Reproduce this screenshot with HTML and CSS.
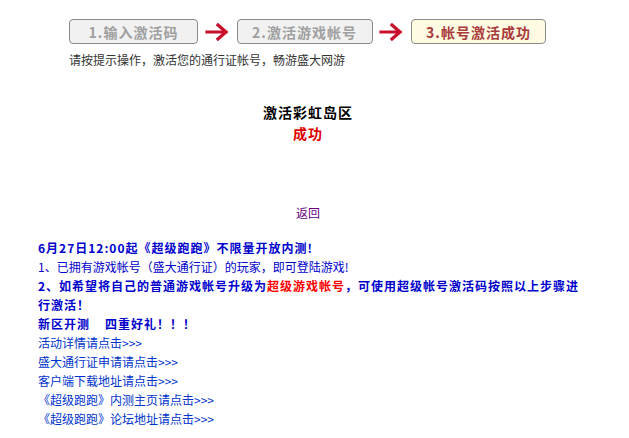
FILE: index.html
```html
<!DOCTYPE html>
<html lang="zh-CN">
<head>
<meta charset="utf-8">
<title>帐号激活成功</title>
<link rel="stylesheet" href="styles.css">
</head>
<body>
<div class="page">
  <div class="steps">
    <div class="step step-done">1.输入激活码</div>
    <div class="arrow"><svg width="25" height="18" viewBox="0 0 25 18"><path d="M2 9H21M13 2L21 9L13 16" fill="none" stroke="#c8102e" stroke-width="3.2" stroke-linecap="square"/></svg></div>
    <div class="step step-done step-wide">2.激活游戏帐号</div>
    <div class="arrow"><svg width="25" height="18" viewBox="0 0 25 18"><path d="M2 9H21M13 2L21 9L13 16" fill="none" stroke="#c8102e" stroke-width="3.2" stroke-linecap="square"/></svg></div>
    <div class="step step-current">3.帐号激活成功</div>
  </div>
  <p class="tip">请按提示操作，激活您的通行证帐号，畅游盛大网游</p>

  <div class="result">
    <p class="result-title">激活彩虹岛区</p>
    <p class="result-status">成功</p>
    <p class="result-back"><a class="back-link" href="#">返回</a></p>
  </div>

  <div class="notice">
    <p class="line strong">6月27日12:00起《超级跑跑》不限量开放内测!</p>
    <p class="line">1、已拥有游戏帐号（盛大通行证）的玩家，即可登陆游戏!</p>
    <p class="line strong"><span class="nowrap">2、如希望将自己的普通游戏帐号升级为<span class="hl">超级游戏帐号</span>，可使用超级帐号激活码按照以上步骤进</span><br>行激活！</p>
    <p class="line strong">新区开测&nbsp;&nbsp;&nbsp;&nbsp;四重好礼！！！</p>
    <p class="line"><a class="link" href="#">活动详情请点击&gt;&gt;&gt;</a></p>
    <p class="line"><a class="link" href="#">盛大通行证申请请点击&gt;&gt;&gt;</a></p>
    <p class="line"><a class="link" href="#">客户端下载地址请点击&gt;&gt;&gt;</a></p>
    <p class="line"><a class="link" href="#">《超级跑跑》内测主页请点击&gt;&gt;&gt;</a></p>
    <p class="line"><a class="link" href="#">《超级跑跑》论坛地址请点击&gt;&gt;&gt;</a></p>
  </div>
</div>
</body>
</html>
```

FILE: styles.css
```css
* {
  box-sizing: border-box;
}

html, body {
  margin: 0;
  padding: 0;
  background: #ffffff;
}

body {
  font-family: "Noto Sans CJK SC", "Noto Sans", sans-serif;
  font-size: 12px;
  color: #333333;
}

p {
  margin: 0;
}

.page {
  width: 600px;
  margin-left: 8px;
  padding-top: 19px;
}

.steps {
  display: flex;
  align-items: center;
  margin-left: 61px;
}

.step {
  height: 25px;
  width: 129px;
  border: 1px solid #8a8a8a;
  border-radius: 4px;
  display: flex;
  align-items: center;
  justify-content: center;
  font-size: 14px;
  letter-spacing: 1px;
  font-weight: bold;
  line-height: 1;
}

.step-wide {
  width: 136px;
}

.step-done {
  background: #f1f1f1;
  color: #a0a0a0;
}

.step-current {
  width: 135px;
  background: #fffbe3;
  color: #a83a3a;
}

.arrow {
  width: 38.5px;
  display: flex;
  justify-content: center;
  align-items: center;
}

.arrow svg {
  display: block;
}

.tip {
  margin-left: 61px;
  margin-top: 8px;
  line-height: 16px;
  color: #333333;
}

.result {
  text-align: center;
  margin-top: 34px;
}

.result-title {
  font-size: 14px;
  letter-spacing: 1px;
  font-weight: bold;
  line-height: 21px;
  color: #000000;
}

.result-status {
  font-size: 14px;
  letter-spacing: 1px;
  font-weight: bold;
  line-height: 21px;
  color: #e00000;
}

.result-back {
  margin-top: 61px;
  line-height: 16px;
}

.back-link {
  color: #660080;
  text-decoration: none;
}

.notice {
  margin-top: 17px;
  padding: 0 12px 0 30px;
  color: #0000cc;
}

.line {
  line-height: 19px;
}

.nowrap {
  white-space: nowrap;
}

.strong {
  font-weight: bold;
  letter-spacing: 1px;
}

.hl {
  color: #ff0000;
}

.link {
  color: #0033cc;
  text-decoration: none;
}
```
